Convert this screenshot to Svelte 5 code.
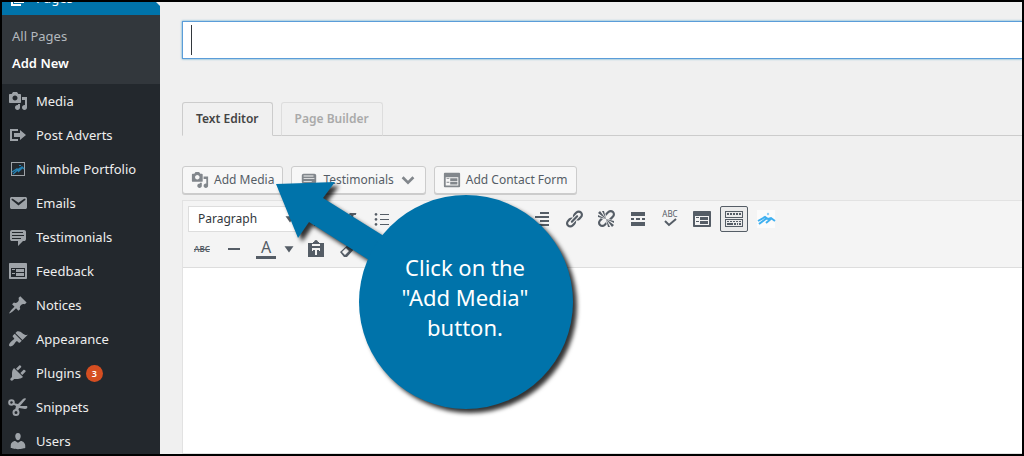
<script>
  const icons = {
    pages: 'M6 15V2h10v13H6zM5 16h8v2H3V5h2v11z',
    media: 'M13 11V4c0-.55-.45-1-1-1h-1.67L9 1H5L3.67 3H2c-.55 0-1 .45-1 1v7c0 .55.45 1 1 1h10c.55 0 1-.45 1-1zM7 4.5c1.38 0 2.5 1.12 2.5 2.5S8.38 9.5 7 9.5 4.5 8.38 4.5 7 5.62 4.5 7 4.5zM14 6h5v10.5c0 1.38-1.12 2.5-2.5 2.5S14 17.88 14 16.5s1.12-2.5 2.5-2.5c.17 0 .34.02.5.05V9h-3V6zm-4 8.05V13h2v3.5c0 1.38-1.12 2.5-2.5 2.5S7 17.88 7 16.5 8.12 14 9.5 14c.17 0 .34.02.5.05z',
    adverts: 'M4 6h6V4H2v12.01h8V14H4V6zm2 2h6V5l6 5-6 5v-3H6V8z',
    email: 'M3.87 4h13.25C18.37 4 19 4.59 19 5.79v8.42c0 1.19-.63 1.79-1.88 1.79H3.87c-1.25 0-1.88-.6-1.88-1.79V5.79c0-1.2.63-1.79 1.88-1.79zm6.62 8.6l6.74-5.53c.24-.2.43-.66.13-1.07-.29-.41-.82-.42-1.17-.17l-5.7 3.86L4.8 5.83c-.35-.25-.88-.24-1.17.17-.3.41-.11.87.13 1.07z',
    testimonial: 'M4 3h12c.55 0 1.02.2 1.41.59S18 4.45 18 5v7c0 .55-.2 1.02-.59 1.41S16.55 14 16 14h-1l-5 5v-5H4c-.55 0-1.02-.2-1.41-.59S2 12.55 2 12V5c0-.55.2-1.02.59-1.41S3.45 3 4 3zm11 2H4v1h11V5zm1 3H4v1h12V8zm-3 3H4v1h9v-1z',
    feedback: 'M2 2h16c.55 0 1 .45 1 1v14c0 .55-.45 1-1 1H2c-.55 0-1-.45-1-1V3c0-.55.45-1 1-1zm15 14V7H3v9h14zM4 8v1h3V8H4zm4 0v3h8V8H8zm-4 4v1h3v-1H4zm4 0v3h8v-3H8z',
    pin: 'M10.44 3.02l1.82-1.82 6.36 6.35-1.83 1.82c-1.05-.68-2.48-.57-3.41.36l-.75.75c-.92.93-1.04 2.35-.35 3.41l-1.83 1.82-2.41-2.41-2.8 2.79c-.42.42-3.38 2.71-3.8 2.29s1.86-3.39 2.28-3.81l2.79-2.79L4.1 9.36l1.83-1.82c1.05.69 2.48.57 3.4-.36l.75-.75c.93-.92 1.05-2.35.36-3.41z',
    appearance: 'M14.48 11.06L7.41 3.99l1.5-1.5c.5-.56 2.3-.47 3.51.32 1.21.8 1.43 1.28 2.91 2.1 1.18.64 2.45 1.26 4.45.85zm-.71.71L6.7 4.7 4.93 6.47c-.39.39-.39 1.02 0 1.41l1.06 1.06c.39.39.39 1.03 0 1.42-.6.6-1.43 1.11-2.21 1.69-.35.26-.7.53-1.01.84C1.43 14.23.4 16.08 1.4 17.07c.99 1 2.84-.03 4.18-1.36.31-.31.58-.66.85-1.02.57-.78 1.08-1.61 1.69-2.21.39-.39 1.02-.39 1.41 0l1.06 1.06c.39.39 1.02.39 1.41 0z',
    plugins: 'M13.11 4.36L9.87 7.6 8 5.73l3.24-3.24c.35-.34 1.05-.2 1.56.32.52.51.66 1.21.31 1.55zm-8 1.77l.91-1.12 9.01 9.01-1.19.84c-.71.71-2.63 1.16-3.82 1.16H6.14L4.9 17.26c-.59.59-1.54.59-2.12 0-.59-.58-.59-1.53 0-2.12l1.24-1.24v-3.88c0-1.13.4-3.19 1.09-3.89zm7.26 3.97l3.24-3.24c.34-.35 1.04-.21 1.55.31.52.51.66 1.21.31 1.55l-3.24 3.25z',
    users: 'M10 9.25c-2.27 0-2.73-3.44-2.73-3.44C7 4.02 7.82 2 9.97 2c2.16 0 2.98 2.02 2.71 3.81 0 0-.41 3.44-2.68 3.44zm0 2.57L12.72 10c2.39 0 4.52 2.33 4.52 4.53v2.49s-3.65 1.13-7.24 1.13c-3.65 0-7.24-1.13-7.24-1.13v-2.49c0-2.25 1.94-4.48 4.47-4.48z',
    bold: 'M6 4v13h4.54c1.37 0 2.46-.33 3.26-1 .8-.66 1.2-1.58 1.2-2.77 0-.84-.17-1.51-.51-2.01s-.9-.85-1.67-1.03v-.09c.57-.1 1.02-.4 1.36-.9s.51-1.13.51-1.91c0-1.14-.39-1.98-1.17-2.5C12.75 4.26 11.5 4 9.78 4H6zm2.57 5.15V6.26h1.36c.73 0 1.27.11 1.61.32.34.22.51.58.51 1.07 0 .54-.16.92-.47 1.15s-.82.35-1.51.35h-1.5zm0 2.19h1.6c1.44 0 2.16.53 2.16 1.61 0 .6-.17 1.05-.51 1.34s-.86.43-1.57.43H8.57v-3.38z',
    italic: 'M15.78 6h-2.13l-2.8 9h2.12l-.62 2H5.6l.62-2h2.14l2.8-9H9.03l.62-2h6.75z',
    ul: 'M4 4a1.4 1.4 0 1 0 .01 0zM8 5h9v1H8zM4 9a1.4 1.4 0 1 0 .01 0zM8 10h9v1H8zM4 14a1.4 1.4 0 1 0 .01 0zM8 15h9v1H8z',
    ol: 'M3 4h2v3H4V5H3zM8 5h9v1H8zM3 9h2v2H3zM8 10h9v1H8zM3 14h2v2H3zM8 15h9v1H8z',
    quote: 'M3 6h6v5l-3 4H3l2-4H3zM11 6h6v5l-3 4h-3l2-4h-2z',
    left: 'M3 3h9v2H3zM3 7h14v2H3zM3 11h9v2H3zM3 15h14v2H3z',
    center: 'M6 3h8v2H6zM3 7h14v2H3zM6 11h8v2H6zM3 15h14v2H3z',
    right: 'M8 3h9v2H8zM3 7h14v2H3zM8 11h9v2H8zM3 15h14v2H3z',
    link: 'M17.74 2.76c1.68 1.69 1.68 4.41 0 6.1l-1.53 1.52c-1.12 1.12-2.7 1.47-4.14 1.09l2.62-2.61.76-.77.76-.76c.84-.84.84-2.2 0-3.04-.84-.85-2.2-.85-3.04 0l-.77.76-3.38 3.38c-.37-1.44-.02-3.02 1.1-4.14l1.52-1.53c1.69-1.68 4.42-1.68 6.1 0zM8.59 13.43l5.34-5.34c.42-.42.42-1.1 0-1.52-.44-.43-1.13-.39-1.53 0l-5.33 5.34c-.42.42-.42 1.1 0 1.52.44.43 1.13.39 1.52 0zm-.76 2.29l4.14-4.15c.38 1.44.03 3.02-1.09 4.14l-1.52 1.53c-1.69 1.68-4.41 1.68-6.1 0-1.68-1.68-1.68-4.42 0-6.1l1.53-1.52c1.12-1.12 2.7-1.47 4.14-1.1l-4.14 4.15c-.85.84-.85 2.2 0 3.05.84.84 2.2.84 3.04 0z',
    unlink: 'M17.74 2.26c1.68 1.69 1.68 4.41 0 6.1l-1.53 1.52c-.32.33-.69.58-1.08.77L13 10l1.69-1.64.76-.77.76-.76c.84-.84.84-2.2 0-3.04-.84-.85-2.2-.85-3.04 0l-.77.76-.76.76L10 7l-.65-2.14c.19-.38.44-.75.77-1.07l1.52-1.53c1.69-1.68 4.42-1.68 6.1 0zM2 4l8 6-6-8zm4-2l4 8-2-8H6zM2 6l8 4-8-2V6zm7.36 7.69L10 13l.74 2.35-1.38 1.39c-1.69 1.68-4.41 1.68-6.1 0-1.68-1.68-1.68-4.42 0-6.1l1.39-1.38L7 10l-.69.64-1.52 1.53c-.85.84-.85 2.2 0 3.04.84.85 2.2.85 3.04 0zM18 16l-8-6 6 8zm-4 2l-4-8 2 8h2zm4-4l-8-4 8 2v2z',
    more: 'M3 3h14v4H3zM3 9h3v2H3zM8 9h4v2H8zM14 9h3v2h-3zM3 13h14v4H3z',
    kitchensink: 'M1 2h18v7H1zM2 3v5h16V3zM3 4h2v2H3zM6 4h2v2H6zM9 4h2v2H9zM12 4h2v2h-2zM15 4h2v2h-2zM1 10h18v8H1zM2 11v6h16v-6zM3 12h2v1H3zM6 12h2v1H6zM9 12h2v1H9zM12 12h2v1h-2zM15 12h2v1h-2zM3 14h6v2H3zM10 14h2v2h-2zM13 14h1v2h-1zM15 14h2v2h-2z',
    hr: 'M4 9h12v2H4z',
    paste: 'M7 4V3h1c0-1 1-2 2-2s2 1 2 2h1v1h5v14H2V4zM6 7h8V5H6zM6 9v3h1v-1h2v5h2v-5h2v1h1V9z',
    eraser: 'M13 3l5 5-9 10H6l-4-5zM4 13l3 3 4-4-3-3z'
  };

  const menu = [
    { label: 'Media', icon: 'media' },
    { label: 'Post Adverts', icon: 'adverts' },
    { label: 'Nimble Portfolio', icon: 'nimble' },
    { label: 'Emails', icon: 'email' },
    { label: 'Testimonials', icon: 'testimonial' },
    { label: 'Feedback', icon: 'feedback' },
    { label: 'Notices', icon: 'pin' },
    { label: 'Appearance', icon: 'appearance' },
    { label: 'Plugins', icon: 'plugins', count: 3 },
    { label: 'Snippets', icon: 'snippets' },
    { label: 'Users', icon: 'users' }
  ];

  const tools = [
    { name: 'Bold', icon: 'bold' },
    { name: 'Italic', icon: 'italic' },
    { name: 'Bulleted list', icon: 'ul' },
    { name: 'Numbered list', icon: 'ol' },
    { name: 'Blockquote', icon: 'quote' },
    { name: 'Align left', icon: 'left' },
    { name: 'Align center', icon: 'center' },
    { name: 'Align right', icon: 'right' },
    { name: 'Insert link', icon: 'link' },
    { name: 'Remove link', icon: 'unlink' },
    { name: 'Read more', icon: 'more' },
    { name: 'Spellcheck', icon: 'spell' },
    { name: 'Contact form', icon: 'feedback' },
    { name: 'Toolbar toggle', icon: 'kitchensink' },
    { name: 'Nimble Portfolio', icon: 'nimbleTool' }
  ];

  let title = $state('');
  let tab = $state('text');
  let sink = $state(true);
</script>

{#snippet icon(name)}
  <svg class="icon" viewBox="0 0 20 20" aria-hidden="true">
    {#if name === 'nimble'}
      <rect x="3.5" y="3.5" width="13" height="13" fill="none" stroke="#9ea3a8" />
      <path d="M4 13l5-3 1 1 4-3 2 2M5 15l7-6M10 13l4-4" fill="none" stroke="#2583b5" stroke-width="1.4" />
      <path d="M11 6h2v1h-2z" fill="#2583b5" />
    {:else if name === 'nimbleTool'}
      <path d="M1 1h18v18H1z" fill="#fbfbfb" />
      <path d="M2 12l7-4 3 2 3-1 4 3M3 15l8-6M10 14l6-5" fill="none" stroke="#3fb0f0" stroke-width="2" />
      <circle cx="12" cy="5" r="1.2" fill="#8fd0f7" />
    {:else if name === 'snippets'}
      <g fill="none" stroke="currentColor">
        <circle cx="3.5" cy="5.5" r="2.3" stroke-width="2" />
        <circle cx="8" cy="15.5" r="2.5" stroke-width="2" />
      </g>
      <path d="M5 6l5 1 5-5c1-1 3-1 3 0l-6 7h7c1 1 0 3-2 3l-6-1-1 3-3-1 1-4-4-2z" />
    {:else if name === 'spell'}
      <text x="10" y="8" class="abc">ABC</text>
      <path d="M5 12l4 4 7-6" fill="none" stroke="currentColor" stroke-width="2" />
    {:else if name === 'strike'}
      <text x="10" y="13" class="abc bold">ABC</text>
      <path d="M2 10h16v1H2z" />
    {:else if name === 'color'}
      <text x="10" y="14" class="letter">A</text>
      <path d="M0 17h20v3H0z" />
    {:else if name === 'chevron'}
      <path d="M4 7l6 6 6-6" fill="none" stroke="currentColor" stroke-width="3" />
    {:else if name === 'arrow'}
      <path d="M5 7h10l-5 7z" />
    {:else}
      <path fill-rule="evenodd" d={icons[name]} />
    {/if}
  </svg>
{/snippet}

<div class="screen">
  <nav class="sidebar" aria-label="Admin menu">
    <a class="item current" href="#pages">{@render icon('pages')}Pages</a>
    <div class="submenu">
      <a href="#all-pages">All Pages</a>
      <a class="active" href="#add-new">Add New</a>
    </div>
    {#each menu as entry}
      <a class="item" href="#{entry.icon}">
        {@render icon(entry.icon)}
        {entry.label}
        {#if entry.count}<span class="count">{entry.count}</span>{/if}
      </a>
    {/each}
  </nav>

  <main>
    <div class="title">
      <input type="text" aria-label="Title" bind:value={title} />
    </div>

    <div class="tabs" role="tablist">
      <button role="tab" aria-selected={tab === 'text'} class:selected={tab === 'text'} onclick={() => tab = 'text'}>Text Editor</button>
      <button role="tab" aria-selected={tab === 'builder'} class:selected={tab === 'builder'} onclick={() => tab = 'builder'}>Page Builder</button>
    </div>

    <div class="media-buttons">
      <button>{@render icon('media')}Add Media</button>
      <button>{@render icon('testimonial')}Testimonials{@render icon('chevron')}</button>
      <button>{@render icon('feedback')}Add Contact Form</button>
    </div>

    <div class="editor">
      <div class="toolbar">
        <div class="row">
          <div class="format">
            <select aria-label="Format">
              <option>Paragraph</option>
              <option>Heading 1</option>
              <option>Heading 2</option>
            </select>
            {@render icon('arrow')}
          </div>
          {#each tools as tool}
            {#if tool.icon === 'kitchensink'}
              <button class="tool" class:pressed={sink} aria-label={tool.name} onclick={() => sink = !sink}>{@render icon(tool.icon)}</button>
            {:else}
              <button class="tool" aria-label={tool.name}>{@render icon(tool.icon)}</button>
            {/if}
          {/each}
        </div>
        {#if sink}
          <div class="row">
            <button class="tool" aria-label="Strikethrough">{@render icon('strike')}</button>
            <button class="tool" aria-label="Horizontal line">{@render icon('hr')}</button>
            <div class="split">
              <button class="tool" aria-label="Text color">{@render icon('color')}</button>
              <button class="tool open" aria-label="Choose text color">{@render icon('arrow')}</button>
            </div>
            <button class="tool" aria-label="Paste as text">{@render icon('paste')}</button>
            <button class="tool" aria-label="Clear formatting">{@render icon('eraser')}</button>
          </div>
        {/if}
      </div>
      <div class="content" contenteditable="true" role="textbox" aria-label="Page content" tabindex="0"></div>
    </div>
  </main>

  <div class="callout">
    <svg viewBox="0 0 310 236" aria-hidden="true">
      <path d="M1 4L60 2 48 18 120 63 105 87 34 42 23 58z" />
      <circle cx="191" cy="122" r="107" />
    </svg>
    <p>Click on the<br />"Add Media"<br />button.</p>
  </div>
</div>

<style>
  :global(body) {
    background: #000;
  }

  .screen, .screen * {
    box-sizing: border-box;
  }

  .screen {
    position: relative;
    display: flex;
    height: 100vh;
    border: 2px solid #000;
    overflow: hidden;
    background: #f0f0f0;
    font: 13px/18px "Noto Sans", "Open Sans", sans-serif;
    color: #555d66;
  }

  button {
    font: inherit;
    color: inherit;
  }

  .icon {
    display: block;
    flex: none;
    width: 20px;
    height: 20px;
    overflow: visible;
    fill: currentColor;
  }

  .sidebar {
    flex: none;
    width: 158px;
    margin-top: -21px;
    background: #23282d;
  }

  .sidebar a {
    text-decoration: none;
  }

  .item {
    display: flex;
    align-items: center;
    gap: 5px;
    height: 34px;
    padding-left: 6px;
    color: #eee;
  }

  .item .icon {
    margin-right: 3px;
    color: #9ea3a8;
  }

  .current {
    position: relative;
    background: #0073aa;
    color: #fff;
  }

  .current .icon {
    color: #fff;
  }

  .current::after {
    content: '';
    position: absolute;
    right: 0;
    top: 9px;
    border: 8px solid transparent;
    border-left: 0;
    border-right-color: #f0f0f0;
  }

  .submenu {
    display: flex;
    flex-direction: column;
    padding: 8px 10px 7px;
    background: #32373c;
  }

  .submenu a {
    line-height: 27px;
    color: #b4b9be;
  }

  .submenu .active {
    color: #fff;
    font-weight: 600;
  }

  .count {
    width: 17px;
    border-radius: 9px;
    background: #d54e21;
    color: #fff;
    font-size: 9px;
    font-weight: 600;
    line-height: 17px;
    text-align: center;
  }

  main {
    flex: 1;
    display: flex;
    flex-direction: column;
    min-width: 0;
    padding: 19px 0 0 22px;
  }

  .title {
    position: relative;
  }

  .title::after {
    content: '';
    position: absolute;
    left: 9px;
    top: 4px;
    width: 1px;
    height: 30px;
    background: #32373c;
  }

  .title input {
    display: block;
    width: 100%;
    height: 38px;
    padding: 3px 8px;
    border: 1px solid #5b9dd9;
    border-right: 0;
    outline: 0;
    background: #fff;
    box-shadow: 0 0 2px rgba(30, 140, 190, .8);
    font: inherit;
    font-size: 22px;
  }

  .tabs {
    display: flex;
    gap: 8px;
    margin-top: 43px;
    box-shadow: inset 0 -1px #ccc;
  }

  .tabs button {
    height: 34px;
    padding: 0 13px;
    border: 1px solid #ddd;
    border-bottom-color: #ccc;
    border-radius: 3px 3px 0 0;
    background: #f0f0f0;
    color: #aaa;
    font-size: 12px;
    font-weight: 600;
  }

  .tabs .selected {
    border-color: #ccc;
    border-bottom-color: #f0f0f0;
    color: #444;
  }

  .media-buttons {
    display: flex;
    gap: 8px;
    margin: 30px 0 6px;
  }

  .media-buttons button {
    display: flex;
    align-items: center;
    gap: 5px;
    height: 28px;
    padding: 0 8px;
    border: 1px solid #ccc;
    border-radius: 3px;
    background: #f7f7f7;
    box-shadow: 0 1px 0 #ccc;
    font-size: 12px;
  }

  .media-buttons .icon {
    width: 18px;
    height: 18px;
    color: #82878c;
  }

  .editor {
    flex: 1;
    display: flex;
    flex-direction: column;
    border: 1px solid #e2e2e2;
    border-right: 0;
  }

  .toolbar {
    display: flex;
    flex-direction: column;
    gap: 4px;
    padding: 5px;
    border-bottom: 1px solid #ddd;
    background: #f4f4f4;
  }

  .row {
    display: flex;
    gap: 4px;
  }

  .format {
    display: flex;
    align-items: center;
    width: 112px;
    height: 26px;
    border: 1px solid #ddd;
    background: #fff;
  }

  .format select {
    flex: 1;
    min-width: 0;
    height: 24px;
    padding: 0 0 0 9px;
    border: 0;
    appearance: none;
    background: none;
    font: inherit;
    font-size: 12px;
    color: #32373c;
  }

  .format .icon, .open .icon {
    width: 18px;
    height: 18px;
  }

  .tool {
    display: flex;
    align-items: center;
    justify-content: center;
    width: 28px;
    height: 26px;
    padding: 0;
    border: 1px solid transparent;
    border-radius: 2px;
    background: none;
  }

  .pressed {
    border-color: #555d66;
    background: #ebebeb;
  }

  .split {
    display: flex;
  }

  .open {
    width: 18px;
  }

  .abc {
    font-size: 8px;
    text-anchor: middle;
  }

  .bold {
    font-weight: 600;
  }

  .letter {
    font-size: 16px;
    text-anchor: middle;
  }

  .content {
    flex: 1;
    outline: 0;
    background: #fff;
  }

  /* pointer bubble that floats over the editor */
  .callout {
    position: absolute;
    left: 273px;
    top: 178px;
    width: 310px;
    height: 236px;
  }

  .callout svg {
    display: block;
    width: 100%;
    fill: #0073aa;
    filter: drop-shadow(4px 4px 2px rgba(0, 0, 0, .8));
  }

  .callout p {
    position: absolute;
    left: 83px;
    top: 72px;
    width: 214px;
    margin: 0;
    color: #fff;
    font-size: 22px;
    line-height: 30px;
    text-align: center;
  }
</style>
